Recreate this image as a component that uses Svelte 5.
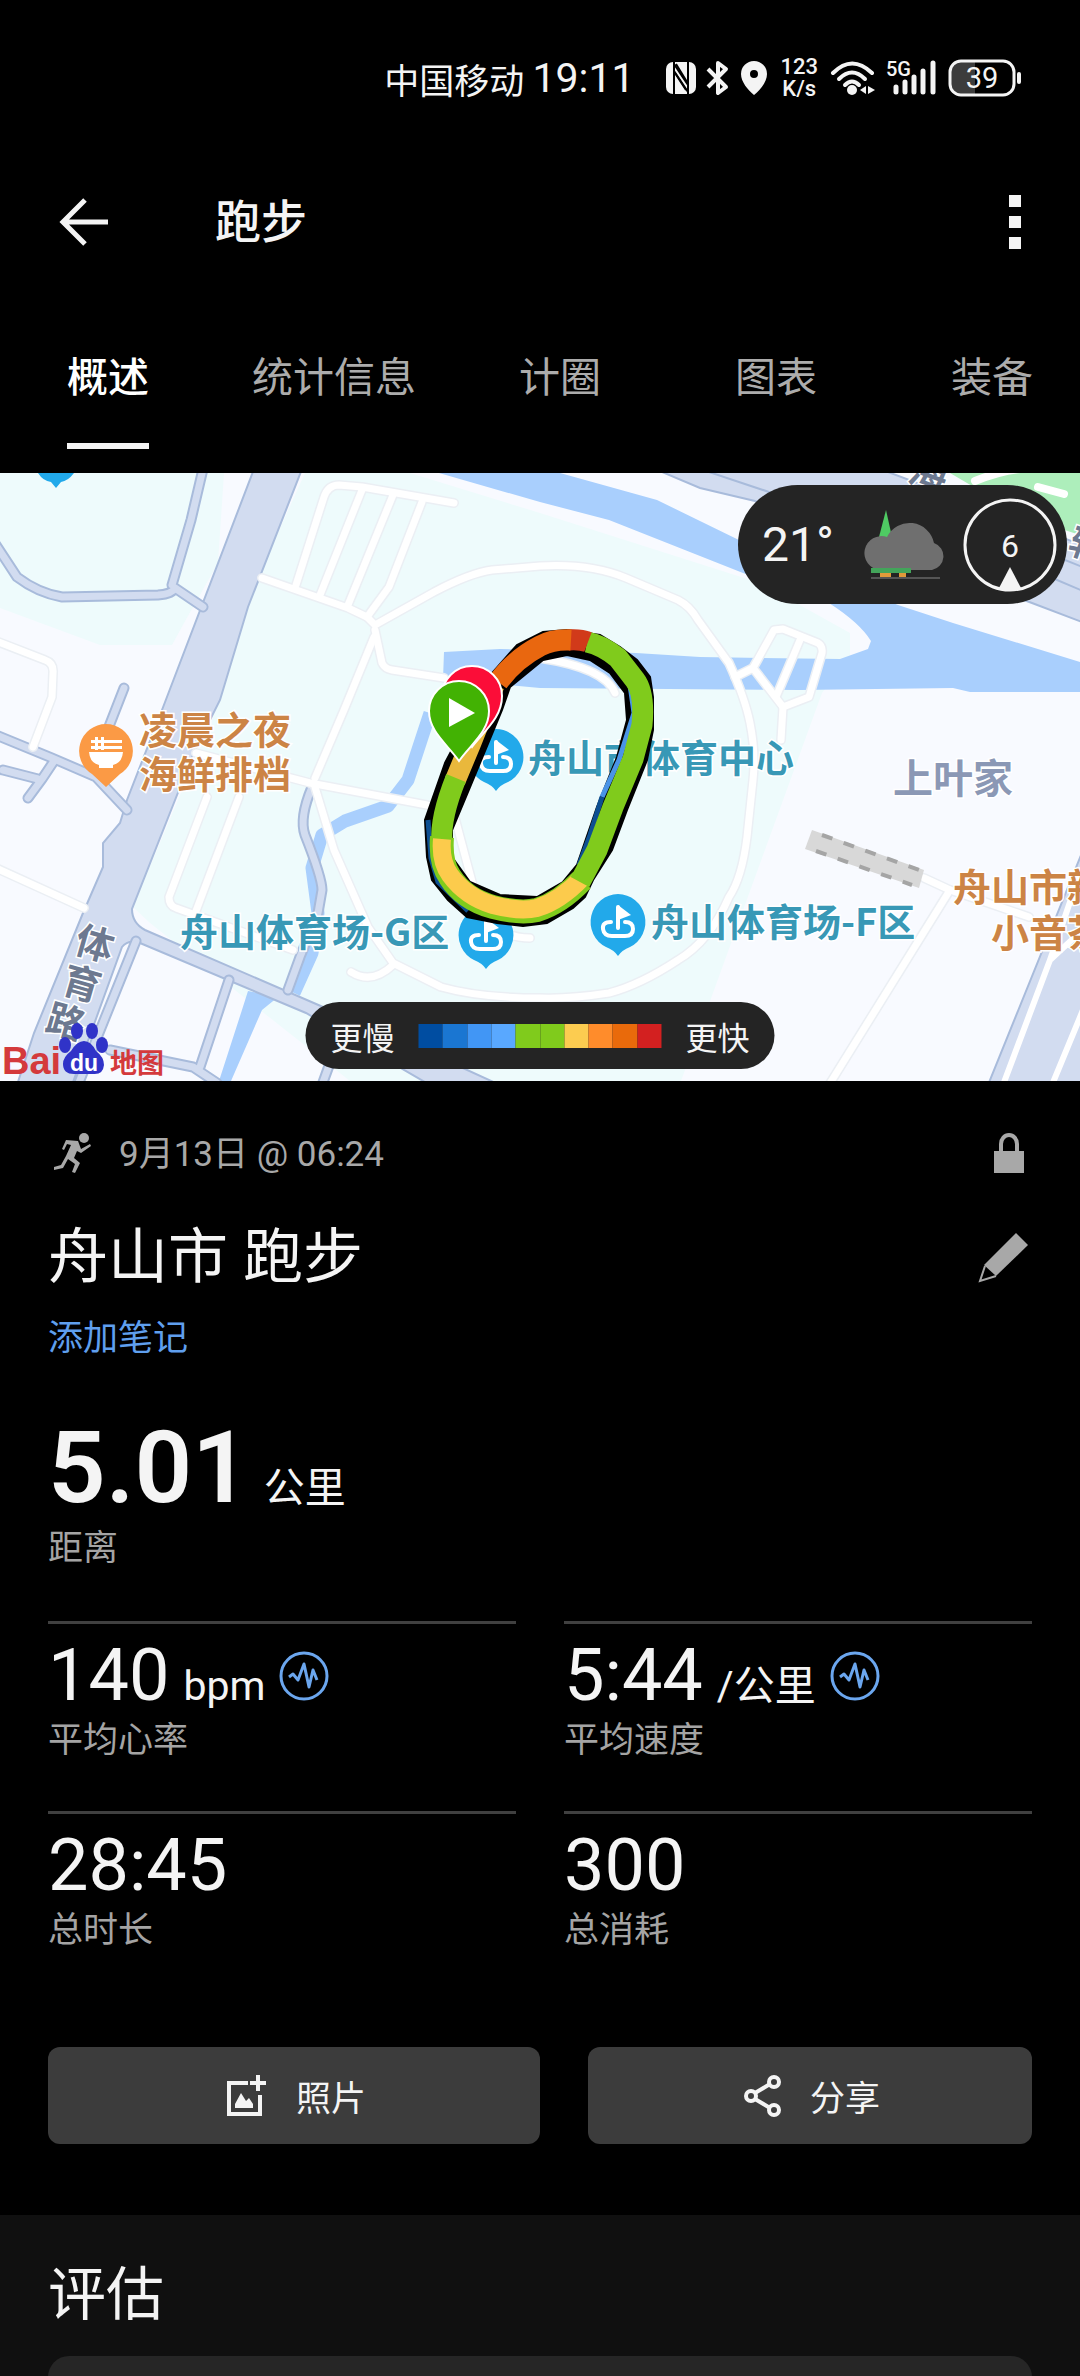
<script>
	const tabs = ['概述', '统计信息', '计圈', '图表', '装备']
	let activeTab = '概述'

	const paceColors = [
		'#004da1', '#1a76d2', '#4196f5', '#59a8ff', '#80cb1c',
		'#80cb1c', '#fccc50', '#ff8c2b', '#e96a0b', '#d32020'
	]

	const stats = [
		{ value: '140', unit: 'bpm', label: '平均心率', chart: true },
		{ value: '5:44', unit: '/公里', label: '平均速度', chart: true },
		{ value: '28:45', label: '总时长' },
		{ value: '300', label: '总消耗' }
	]

	const smallRoads = [
		'M203 -4L191 47L172 112',
		'M-4 72L17 104Q38 120 62 124L158 122Q172 121 175 115L203 134',
		'M124 215L108 256',
		'M-4 262L52 285L96 304L127 337',
		'M3 297L38 306',
		'M54 288L42 306L28 325',
		'M312 314Q299 345 305 362Q322 405 322 417L318 440L300 484L288 517',
		'M229 507L200 594',
		'M110 577L193 594L217 610',
		'M136 468L78 612',
		'M330 590L322 612'
	]

	const paths = [
		'M296 112L324 24Q328 12 339 12L362 14L454 30',
		'M362 17L320 122',
		'M393 22L348 132',
		'M422 29L389 114L367 144',
		'M262 105L348 135L367 144L375 152L434 119Q470 100 492 97L540 93Q590 90 626 105L678 127Q690 133 698 147L729 190Q745 225 750 250Q756 280 753 307L747 364Q742 405 729 424Q710 468 678 487Q640 512 609 520Q570 526 540 525Q480 525 441 514L393 490L368 454L334 377L315 314',
		'M375 157L382 190Q385 196 392 197L444 205',
		'M374 164L344 237L315 305',
		'M196 280L310 310L427 332',
		'M207 324L169 424Q169 433 176 435L293 477',
		'M239 324L196 438',
		'M-4 168L45 187Q54 190 53 200L52 224L33 274',
		'M-4 395L84 435',
		'M351 499Q372 512 393 492',
		'M735 204L753 195L774 157L783 156L818 170Q823 173 822 180L809 224L783 234L753 195',
		'M800 167L776 224',
		'M783 234L781 267',
		'M924 405L950 417L829 612',
		'M950 417L1029 444',
		'M540 185Q605 195 615 220',
		'M455 345L475 420Q490 465 530 465'
	]

	const sportPins = [[496, 284], [486, 462], [618, 449]]
</script>

<div class="page">
	<div class="status-bar">
		<span class="carrier">中国移动</span>
		<span class="clock">19:11</span>
		<svg class="nfc" width="32" height="34" viewBox="0 0 32 34">
			<rect x="1" y="1" width="30" height="32" rx="7" fill="#f4f4f4" />
			<path d="M9 1V33M9 3L23 24M23 33V1M23 31L9 10" fill="none" stroke="#000" stroke-width="2" />
			<path d="M10 12L21 29M11 3L22 21" fill="none" stroke="#000" stroke-width="2" />
		</svg>
		<svg class="bluetooth" width="24" height="36" viewBox="0 0 24 36">
			<path d="M2 9L20 27L12 33V3L20 9L2 27" fill="none" stroke="#f4f4f4" stroke-width="4" stroke-linejoin="round" />
		</svg>
		<svg class="location" width="28" height="36" viewBox="0 0 28 36">
			<path d="M14 1A13 13 0 0 0 1 14C1 22 8 30 14 35C20 30 27 22 27 14A13 13 0 0 0 14 1ZM14 10A4 4 0 1 1 14 18A4 4 0 0 1 14 10Z" fill="#f4f4f4" />
		</svg>
		<span class="net-speed">123<br />K/s</span>
		<svg class="wifi" width="46" height="36" viewBox="0 0 46 36">
			<g fill="none" stroke="#f4f4f4" stroke-width="4" stroke-linecap="round">
				<path d="M3 13Q22 -6 42 13" />
				<path d="M9 19Q22 6 35 19" />
				<path d="M15 25Q22 18 29 25" />
			</g>
			<circle cx="22" cy="30" r="5" fill="#f4f4f4" />
			<path d="M36 26V34L30 30ZM38 26L45 30L38 34Z" fill="#f4f4f4" />
		</svg>
		<svg class="signal" width="52" height="38" viewBox="0 0 52 38">
			<text x="0" y="17" font-size="20" font-weight="500" fill="#f4f4f4">5G</text>
			<path d="M10 28V33M19 23V33M28 18V33M37 12V33M47 4V33" stroke="#f4f4f4" stroke-width="5" stroke-linecap="round" />
		</svg>
		<svg class="battery" width="76" height="38" viewBox="0 0 76 38">
			<path d="M13 3H27V35H13A10 10 0 0 1 3 25V13A10 10 0 0 1 13 3Z" fill="#3c3c3c" />
			<rect x="2" y="2" width="64" height="34" rx="11" fill="none" stroke="#f4f4f4" stroke-width="3" />
			<path d="M71 15V23" stroke="#f4f4f4" stroke-width="4" stroke-linecap="round" />
			<text x="34" y="29" font-size="29" text-anchor="middle" fill="#f4f4f4">39</text>
		</svg>
	</div>

	<header class="app-bar">
		<button class="icon-button" aria-label="返回">
			<svg width="52" height="52" viewBox="0 0 52 52">
				<path d="M50 26H5M27 4L5 26L27 48" fill="none" stroke="#f4f4f4" stroke-width="5" />
			</svg>
		</button>
		<h1>跑步</h1>
		<button class="icon-button" aria-label="更多">
			<svg width="14" height="54" viewBox="0 0 14 54">
				<path d="M1 0H13V12H1ZM1 21H13V33H1ZM1 42H13V54H1Z" fill="#f4f4f4" />
			</svg>
		</button>
	</header>

	<nav class="tabs">
		{#each tabs as tab}
			<button
				class="tab"
				class:active-tab={tab === activeTab}
				on:click={() => { activeTab = tab }}
			>
				<span>{tab}</span>
			</button>
		{/each}
	</nav>

	<section class="map">
		<svg class="map-canvas" viewBox="0 0 1080 608" preserveAspectRatio="xMidYMid slice">
			<rect width="1080" height="608" fill="#f8faff" />
			<!-- grounds -->
			<path d="M0 0H224L218 90L184 150L172 172L100 172L0 135Z" fill="#eefbfc" />
			<path d="M305 0H410L540 40L760 110L850 160V184L822 220L681 608H350L150 450L133 434L220 227L258 104Z" fill="#eefbfc" />
			<path d="M950 0H1080V62Q1030 48 950 0Z" fill="#adeebb" />
			<path d="M975 8Q1000 -2 1020 -4M1038 14L1064 21" fill="none" stroke="#fff" stroke-width="8" stroke-linecap="round" />

			<!-- water -->
			<path d="M439 0H560L657 27L743 69L898 132L953 150L1080 189V219H970L953 215L800 217L540 215L443 206L444 179L500 176L636 180L700 184L840 186L868 176L871 168Q860 150 829 130L743 100L609 47L540 29Z" fill="#a9cffd" />
			<path d="M430 240L408 307L388 333L345 348L322 362L312 395L318 440L312 480L294 520" fill="none" stroke="#a9cffd" stroke-width="13" stroke-linejoin="round" />
			<path d="M248 518L278 524L262 537L231 608H219L241 540Z" fill="#a9cffd" />

			<!-- wide roads -->
			<g fill="#d2dcf0" stroke="#a8bbdb" stroke-width="2">
				<path d="M655 -4L700 15L755 28L1032 130L1090 152V75L880 -4Z" />
				<path d="M700 -4L790 26M1060 85L1090 97M1050 104L1090 121" />
				<path d="M254 -4L162 237L127 327L120 350L103 370V394L83 440L34 560L17 612H72L122 474Q128 466 140 470L306 540L430 612H500L430 580L330 537L145 457Q132 450 132 436L179 317L195 277L220 227L248 134L302 -4Z" />
				<path d="M1090 360L988 612H1090Z" />
			</g>
			<path d="M1090 450L1050 487L1003 612M1090 520L1052 612M1050 487L1080 400" fill="none" stroke="#fff" stroke-width="6" />

			<!-- lanes -->
			{#each smallRoads as d}
				<path {d} fill="none" stroke="#a8bbdb" stroke-width="11" stroke-linecap="round" stroke-linejoin="round" />
			{/each}
			{#each smallRoads as d}
				<path {d} fill="none" stroke="#d2dcf0" stroke-width="7" stroke-linecap="round" stroke-linejoin="round" />
			{/each}
			{#each paths as d}
				<path {d} fill="none" stroke="#ebeff4" stroke-width="10" stroke-linecap="round" stroke-linejoin="round" />
			{/each}
			{#each paths as d}
				<path {d} fill="none" stroke="#fff" stroke-width="7" stroke-linecap="round" stroke-linejoin="round" />
			{/each}

			<!-- station -->
			<path d="M812 357L924 397L919 415L805 376Z" fill="#d8d8d8" />
			<path d="M822 362L919 397M816 378L912 412" stroke="#a5a5a5" stroke-width="4" stroke-dasharray="11 12" />

			<!-- restaurant -->
			<path d="M106 251A27 27 0 0 1 120 301L106 314L92 301A27 27 0 0 1 106 251Z" fill="#fb9a45" />
			<path d="M89 279H123Q122 290 113 292V295H99V292Q90 290 89 279ZM91 267H122V270H91ZM91 273H122V276H91ZM95 264H98V277H95ZM101 264H104V277H101Z" fill="#fff" />

			{#each sportPins as [x, y]}
				<g transform="translate({x} {y})">
					<path d="M0 -28A28 28 0 0 1 12 25Q4 28 0 34Q-4 28 -12 25A28 28 0 0 1 0 -28Z" fill="#22a9ea" />
					<path d="M0 -17L13 -7L0 -2Z" fill="#fff" />
					<path d="M0 6V-15M-7 0Q-16 0 -15 7Q-14 14 -6 14H7Q15 14 15 7Q15 0 7 0" fill="none" stroke="#fff" stroke-width="4" stroke-linecap="round" />
				</g>
			{/each}
			<path d="M38 0H74Q68 8 61 9L56 15L51 9Q43 8 38 0Z" fill="#22a9ea" />

			<g class="place" font-size="38">
				<text x="139" y="271" fill="#cc8445">凌晨之夜</text>
				<text x="139" y="315" fill="#cc8445">海鲜排档</text>
				<text x="953" y="428" fill="#cc8445">舟山市新</text>
				<text x="991" y="474" fill="#cc8445">小音茶</text>
				<text x="528" y="299" fill="#3898b6">舟山市体育中心</text>
				<text x="180" y="473" fill="#3898b6">舟山体育场-G区</text>
				<text x="651" y="463" fill="#3898b6">舟山体育场-F区</text>
				<text x="893" y="320" font-size="40" fill="#8b98b5">上叶家</text>
				<g fill="#6d7990" text-anchor="middle">
					<text transform="translate(91 484) rotate(16)">体</text>
					<text transform="translate(78 524) rotate(16)">育</text>
					<text transform="translate(62 562) rotate(16)">路</text>
					<text transform="translate(924 14) rotate(20)">海</text>
					<text transform="translate(1084 85) rotate(20)">辅</text>
				</g>
			</g>

			<!-- track -->
			<path
				fill-rule="evenodd"
				stroke="#000"
				stroke-width="2"
				d="M445 290L425 347L427 384L432 407L448 427L467 444L497 450L523 453L547 450L573 435L585 424L593 407L612 377L627 337L647 287L653 257V224L650 204L637 187L620 174L600 162L567 157L543 159L517 172L493 199ZM470 314L452 357V384L470 409L500 422L537 424L563 409L577 392L597 334L617 284L627 247L625 220L610 200L590 187L567 182L543 187L510 214L502 237Z"
			/>
			<g fill="none" stroke-width="5">
				<path d="M630 212L634 240L619 287L602 324" stroke="#4a94e6" />
				<path d="M602 324L590 362L579 392M428 347L431 385L438 409L468 438" stroke="#0d4f92" />
			</g>
			<g fill="none" stroke-width="21" stroke-linejoin="round">
				<path d="M494 212L470 272L455 308" stroke="#e9b83c" />
				<path d="M456 305Q440 345 442 368" stroke="#80cb1c" />
				<path d="M442 364Q440 390 450 404Q464 426 493 434Q520 441 537 437Q560 430 582 407" stroke="#80cb1c" stroke-width="24" />
				<path d="M442 366Q440 388 450 402Q466 424 493 432Q520 439 537 435Q560 428 582 405" stroke="#fccb4c" stroke-width="18" />
				<path d="M580 409L597 377L613 334L633 286L642 252Q645 220 635 207L618 185Q602 172 587 169" stroke="#80cb1c" />
				<path d="M588 169Q580 166 568 167" stroke="#d13a1a" />
				<path d="M571 167Q553 166 540 173Q515 186 498 209" stroke="#e9670f" />
			</g>

			<!-- finish and start -->
			<path d="M472 193A30 30 0 0 1 502 223C502 245 484 258 472 274C460 258 442 245 442 223A30 30 0 0 1 472 193Z" fill="#fb0d38" stroke="#fff" stroke-width="2" />
			<path d="M459 208A30 30 0 0 1 489 238C489 259 470 272 459 288C448 272 429 259 429 238A30 30 0 0 1 459 208Z" fill="#42b203" stroke="#fff" stroke-width="2" />
			<path d="M449 225L475 240L449 254Z" fill="#fff" />

			<!-- map provider -->
			<g font-weight="700">
				<text class="latin" x="2" y="601" font-size="38" fill="#d43a3c">Bai</text>
				<g fill="#3033c8">
					<ellipse cx="65" cy="572" rx="6" ry="8" />
					<ellipse cx="77" cy="558" rx="6" ry="8" />
					<ellipse cx="92" cy="558" rx="6" ry="8" />
					<ellipse cx="102" cy="572" rx="6" ry="8" />
					<path d="M84 568Q91 568 96 578Q104 584 104 592Q103 602 93 601H74Q63 601 63 591Q63 584 71 578Q77 568 84 568Z" />
				</g>
				<text class="latin" x="84" y="598" font-size="23" text-anchor="middle" fill="#fff">du</text>
				<text x="110" y="600" font-size="27" fill="#d43a3c">地图</text>
			</g>
		</svg>

		<div class="weather">
			<span>21°</span>
			<svg width="84" height="72" viewBox="0 0 84 72">
				<path d="M23 1L29 28H16Z" fill="#4fcb63" />
				<path d="M17 61H28V69H17ZM36 61H43V69H36Z" fill="#e09a3a" />
				<path d="M17 61A17 17 0 1 1 24 28A25 25 0 0 1 71 34A14 14 0 0 1 69 61Z" fill="#6f6f6f" />
				<path d="M8 59H48V64H8Z" fill="#43a45a" />
				<path d="M8 69H77" stroke="#555" stroke-width="2" />
			</svg>
			<svg width="94" height="94" viewBox="0 0 94 94">
				<circle cx="47" cy="47" r="45" fill="none" stroke="#f4f4f4" stroke-width="3" />
				<path d="M47 69L58 90Q47 94 36 90Z" fill="#f4f4f4" />
				<text x="47" y="59" font-size="32" text-anchor="middle" fill="#f4f4f4">6</text>
			</svg>
		</div>

		<div class="legend">
			<span>更慢</span>
			<div class="legend-bar">
				{#each paceColors as color}
					<i style="background: {color};"></i>
				{/each}
			</div>
			<span>更快</span>
		</div>
	</section>

	<main class="summary">
		<div class="meta">
			<svg width="38" height="42" viewBox="0 0 38 42">
				<circle cx="30" cy="6" r="5" fill="#a8a8a8" />
				<path d="M12 8L24 9L27 17L36 12L37 14L27 21L23 19L20 26L26 31L21 41L18 40L21 32L14 27L9 36L0 38V35L7 33L12 24L17 13L13 12L10 18L8 17Z" fill="#a8a8a8" />
			</svg>
			<time>9月13日 @ 06:24</time>
			<svg class="row-end" width="32" height="42" viewBox="0 0 32 42">
				<path d="M8 20V12A8 9 0 0 1 24 12V20" fill="none" stroke="#a8a8a8" stroke-width="4" />
				<rect x="1" y="19" width="30" height="22" fill="#a8a8a8" />
			</svg>
		</div>
		<div class="title-row">
			<h2>舟山市 跑步</h2>
			<button class="icon-button" aria-label="编辑">
				<svg width="50" height="50" viewBox="0 0 50 50">
					<path d="M38 0L50 12L18 43L6 32Z" fill="#a8a8a8" />
					<path d="M7 33L2 48L18 43" fill="none" stroke="#a8a8a8" stroke-width="2" />
				</svg>
			</button>
		</div>
		<a class="note-link" href="#notes">添加笔记</a>

		<div class="distance">
			<div class="reading">
				<strong>5.01</strong>
				<span class="unit">公里</span>
			</div>
			<div class="label">距离</div>
		</div>

		<div class="stats">
			{#each stats as stat}
				<div class="stat">
					<div class="reading">
						<span class="value">{stat.value}</span>
						{#if stat.unit}
							<span class="unit">{stat.unit}</span>
						{/if}
						{#if stat.chart}
							<svg class="chart-icon" width="50" height="50" viewBox="0 0 50 50">
								<circle cx="25" cy="25" r="23" fill="none" stroke="#6ba6ee" stroke-width="3" />
								<path d="M10 26L14 23L19 29L25 13L30 36L34 19L38 29" fill="none" stroke="#6ba6ee" stroke-width="3" stroke-linejoin="round" />
							</svg>
						{/if}
					</div>
					<div class="label">{stat.label}</div>
				</div>
			{/each}
		</div>

		<div class="actions">
			<button class="action">
				<svg width="42" height="42" viewBox="0 0 42 42">
					<path d="M22 8H3V39H34V20M32 0V16M24 8H40" fill="none" stroke="#f4f4f4" stroke-width="4" />
					<path d="M9 33V29L15 18L20 26L23 23L27 29V33Z" fill="#f4f4f4" />
				</svg>
				照片
			</button>
			<button class="action">
				<svg width="38" height="42" viewBox="0 0 38 42">
					<g fill="none" stroke="#f4f4f4" stroke-width="4">
						<circle cx="7" cy="21" r="5" />
						<circle cx="30" cy="7" r="5" />
						<circle cx="30" cy="35" r="5" />
						<path d="M11 18L26 9M11 24L26 33" />
					</g>
				</svg>
				分享
			</button>
		</div>
	</main>

	<section class="review">
		<h2>评估</h2>
		<div class="card"></div>
	</section>
</div>

<style>
	:global(body) {
		background: #000;
		margin: 0;
	}

	.page {
		background: #000;
		color: #f4f4f4;
		font-family: Roboto, "Noto Sans CJK SC", sans-serif;
		overflow: hidden;
	}

	h1,
	h2 {
		font-weight: 400;
		margin: 0;
	}

	button {
		background: none;
		border: 0;
		color: inherit;
		cursor: pointer;
		font-family: inherit;
		padding: 0;
	}

	svg {
		display: block;
		flex: none;
	}

	.status-bar {
		align-items: center;
		box-sizing: border-box;
		display: flex;
		height: 156px;
		justify-content: flex-end;
		padding-right: 56px;
	}

	.carrier {
		font-size: 35px;
		margin-right: 8px;
	}

	.clock {
		font-size: 41px;
		margin-right: 31px;
	}

	.nfc {
		margin-right: 9px;
	}

	.location {
		margin-right: 12px;
	}

	.bluetooth,
	.wifi,
	.signal {
		margin-right: 10px;
	}

	.net-speed {
		font-size: 22px;
		font-weight: 500;
		line-height: 22px;
		margin-right: 12px;
		text-align: center;
	}

	.app-bar {
		align-items: center;
		display: flex;
		height: 132px;
		padding: 0 58px;
	}

	.app-bar h1 {
		flex: 1;
		font-size: 46px;
		font-weight: 500;
		line-height: 60px;
		padding-left: 105px;
	}

	.tabs {
		display: flex;
		padding: 60px 0 24px;
	}

	.tab {
		color: #acacac;
		flex: none;
		font-size: 41px;
		line-height: 60px;
		min-width: 216px;
		padding: 0 36px;
	}

	.tab span {
		border-bottom: 6px solid transparent;
		display: inline-block;
		padding-bottom: 35px;
		vertical-align: top;
	}

	.active-tab {
		color: #fff;
		font-weight: 500;
	}

	.active-tab span {
		border-color: #f4f4f4;
	}

	.map {
		position: relative;
	}

	.map-canvas {
		aspect-ratio: 1080 / 608;
		width: 100%;
	}

	.place {
		font-family: "Noto Sans CJK SC", sans-serif;
		font-weight: 700;
		paint-order: stroke;
		stroke: #fff;
		stroke-width: 3px;
	}

	.latin {
		font-family: "Liberation Sans", sans-serif;
	}

	.weather {
		align-items: center;
		background: #242424;
		border-radius: 60px;
		box-sizing: border-box;
		display: flex;
		font-size: 48px;
		height: 119px;
		justify-content: space-between;
		padding: 0 10px 0 24px;
		position: absolute;
		right: 13px;
		top: 12px;
		width: 329px;
	}

	.weather span {
		width: 84px;
	}

	.legend {
		align-items: center;
		background: #242424;
		border-radius: 34px;
		bottom: 12px;
		display: flex;
		font-size: 32px;
		gap: 24px;
		height: 67px;
		left: 50%;
		padding: 0 25px;
		position: absolute;
		transform: translateX(-50%);
	}

	.legend span {
		white-space: nowrap;
	}

	.legend-bar {
		display: flex;
		height: 24px;
		width: 243px;
	}

	.legend-bar i {
		flex: 1;
	}

	.summary {
		padding: 42px 48px 71px;
	}

	.meta {
		align-items: center;
		color: #a8a8a8;
		display: flex;
		font-size: 35px;
		gap: 27px;
		height: 60px;
		padding: 0 7px 0 6px;
	}

	.meta time {
		padding-bottom: 6px;
	}

	.row-end {
		margin-left: auto;
	}

	.title-row {
		align-items: center;
		display: flex;
		justify-content: space-between;
		padding: 30px 4px 0 0;
	}

	.title-row h2 {
		font-size: 60px;
		line-height: 90px;
	}

	.note-link {
		color: #5f9fee;
		display: block;
		font-size: 35px;
		line-height: 50px;
		margin-top: 11px;
		text-decoration: none;
	}

	.reading {
		align-items: baseline;
		display: flex;
	}

	.distance {
		margin-top: 48px;
	}

	.distance .reading {
		gap: 14px;
		line-height: 112px;
	}

	.distance strong {
		font-size: 101px;
		font-weight: 600;
	}

	.reading .unit {
		font-size: 41px;
		line-height: 48px;
	}

	.label {
		color: #a4a4a4;
		font-size: 35px;
		line-height: 50px;
	}

	.stats {
		column-gap: 48px;
		display: grid;
		grid-template-columns: 1fr 1fr;
		margin-top: 47px;
	}

	.stat {
		border-top: 3px solid #404040;
		height: 175px;
		padding-top: 12px;
	}

	.stat .reading {
		gap: 14px;
		line-height: 80px;
	}

	.value {
		font-size: 72px;
	}

	.chart-icon {
		align-self: center;
	}

	.actions {
		display: grid;
		gap: 48px;
		grid-template-columns: 492fr 444fr;
		margin-top: 46px;
	}

	.action {
		align-items: center;
		background: #3c3c3c;
		border-radius: 12px;
		display: flex;
		font-size: 35px;
		gap: 28px;
		height: 97px;
		justify-content: center;
		padding-left: 4px;
	}

	.review {
		background: #101010;
		padding: 36px 48px 0;
	}

	.review h2 {
		font-size: 58px;
		line-height: 88px;
	}

	.card {
		background: #262626;
		border-radius: 24px 24px 0 0;
		height: 21px;
		margin-top: 17px;
	}
</style>
